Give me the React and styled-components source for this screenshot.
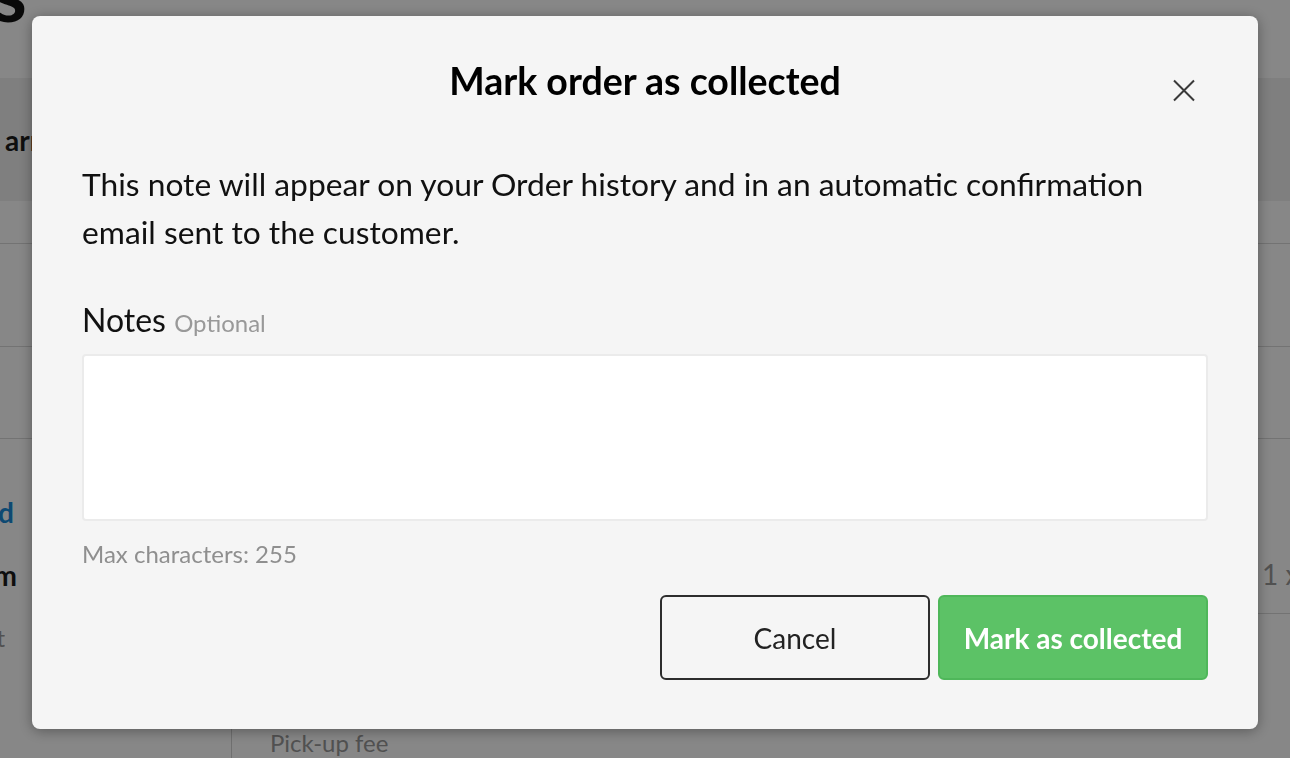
import React from "react";
import styled, { createGlobalStyle } from "styled-components";

const GlobalStyle = createGlobalStyle`
  html, body {
    margin: 0;
    padding: 0;
  }
  body {
    font-family: Lato, "Noto Sans", sans-serif;
    background: #fff;
    color: #111;
    overflow: hidden;
  }
`;

/* page behind the dialog */

const Page = styled.div`
  width: 1290px;
  height: 758px;
  overflow: hidden;
`;

const TopBar = styled.header`
  height: 78px;
`;

const Clip = styled.div`
  width: ${(props) => props.width}px;
  overflow: hidden;
  display: flex;
  justify-content: flex-end;
  white-space: nowrap;
`;

const PageTitle = styled.h1`
  margin: -49px 0 0;
  font-size: 80px;
  line-height: 1;
  font-weight: 700;
  color: #111;
`;

const Band = styled.div`
  height: 123px;
  background: #f0f0f0;
  display: flex;
  align-items: center;
  padding-left: 5px;
  white-space: nowrap;
`;

const BandLabel = styled.span`
  font-size: 28px;
  line-height: 34px;
  font-weight: 700;
  color: #1c1c1c;
`;

const Row = styled.div`
  height: ${(props) => props.height}px;
  border-bottom: 1px solid #d9d9d9;
`;

const Detail = styled.div`
  display: grid;
  grid-template-columns: 231px 1fr;
  height: 320px;
`;

const Side = styled.div`
  display: flex;
  flex-direction: column;
  padding-top: 56px;
`;

const SideItem = styled.span`
  font-size: ${(props) => (props.small ? 24 : 28)}px;
  line-height: ${(props) => (props.small ? 30 : 34)}px;
  font-weight: ${(props) => (props.small ? 400 : 700)};
  color: ${(props) => props.color || "#1c1c1c"};
  margin-top: ${(props) => props.gap || 0}px;
`;

const Main = styled.div`
  border-left: 1px solid #d2d2d2;
`;

const LineRow = styled.div`
  display: grid;
  grid-template-columns: 992px auto;
  padding: ${(props) => props.top}px 0 0 38px;
  height: ${(props) => props.height}px;
  box-sizing: border-box;
  border-bottom: ${(props) => (props.divider ? "1px solid #d9d9d9" : "none")};
  white-space: nowrap;
`;

const LineText = styled.span`
  font-size: ${(props) => props.size}px;
  line-height: ${(props) => props.lh}px;
  color: #999;
`;

/* dialog */

const Overlay = styled.div`
  position: fixed;
  inset: 0;
  background: rgba(0, 0, 0, 0.47);
  display: flex;
  justify-content: center;
  align-items: flex-start;
  padding-top: 16px;
`;

const Modal = styled.div`
  width: 1226px;
  box-sizing: border-box;
  background: #f5f5f5;
  border-radius: 8px;
  box-shadow: 0 2px 14px rgba(0, 0, 0, 0.35);
  padding: 41px 50px 49px;
`;

const Header = styled.div`
  display: grid;
  grid-template-columns: 1fr auto 1fr;
`;

const Title = styled.h2`
  grid-column: 2;
  margin: 0;
  font-size: 37.5px;
  line-height: 48px;
  font-weight: 700;
  color: #000;
`;

const CloseButton = styled.button`
  grid-column: 3;
  justify-self: end;
  align-self: start;
  margin: 22px 13px 0 0;
  width: 22px;
  height: 23px;
  padding: 0;
  border: none;
  background: none;
  color: #3a3a3a;
  cursor: pointer;
  display: flex;
`;

const Intro = styled.p`
  margin: 55px 0 0;
  font-size: 31.75px;
  line-height: 48px;
  color: #111;
`;

const Label = styled.label`
  display: block;
  margin-top: 44px;
  font-size: 32px;
  line-height: 40px;
  color: #111;
`;

const Optional = styled.span`
  font-size: 24px;
  line-height: 1;
  color: #999;
`;

const NotesInput = styled.textarea`
  display: block;
  margin-top: 14px;
  width: 100%;
  height: 167px;
  box-sizing: border-box;
  background: #fff;
  border: 2px solid #ebebeb;
  border-radius: 4px;
  resize: none;
  font-family: inherit;
  font-size: 24px;
  padding: 12px 16px;
  outline: none;
`;

const Hint = styled.div`
  margin-top: 18px;
  font-size: 24px;
  line-height: 30px;
  color: #8f8f8f;
`;

const Actions = styled.div`
  margin-top: 26px;
  display: flex;
  justify-content: flex-end;
  gap: 8px;
`;

const Button = styled.button`
  width: 270px;
  height: 85px;
  box-sizing: border-box;
  border-radius: 6px;
  font-family: inherit;
  font-size: 28px;
  cursor: pointer;
  border: 2px solid ${(props) => (props.primary ? "#4fb75a" : "#2d2d2d")};
  background: ${(props) => (props.primary ? "#5cc266" : "transparent")};
  color: ${(props) => (props.primary ? "#fff" : "#222")};
  font-weight: ${(props) => (props.primary ? 700 : 400)};
`;

export default function App() {
  return (
    <>
      <GlobalStyle />
      <Page>
        <TopBar>
          <Clip width={27}>
            <PageTitle>Orders</PageTitle>
          </Clip>
        </TopBar>
        <Band>
          <BandLabel>arrivals today</BandLabel>
        </Band>
        <Row height={42} />
        <Row height={102} />
        <Row height={91} />
        <Detail>
          <Side>
            <Clip width={14}>
              <SideItem color="#1a8ad8">Collected</SideItem>
            </Clip>
            <Clip width={17}>
              <SideItem gap={29}>Anna Pearson Bloom</SideItem>
            </Clip>
            <Clip width={5}>
              <SideItem small gap={31} color="#999">
                Paid by card at checkout
              </SideItem>
            </Clip>
          </Side>
          <Main>
            <LineRow top={118} height={175} divider>
              <span />
              <LineText size={28} lh={34}>
                1 x Sourdough loaf
              </LineText>
            </LineRow>
            <LineRow top={114} height={160}>
              <LineText size={24} lh={30}>
                Pick-up fee
              </LineText>
            </LineRow>
          </Main>
        </Detail>
      </Page>

      <Overlay>
        <Modal role="dialog" aria-modal="true">
          <Header>
            <Title>Mark order as collected</Title>
            <CloseButton aria-label="Close">
              <svg width="22" height="23" viewBox="0 0 22 23">
                <path
                  d="M1 1.5 L21 21.5 M21 1.5 L1 21.5"
                  stroke="currentColor"
                  strokeWidth="2"
                  fill="none"
                />
              </svg>
            </CloseButton>
          </Header>
          <Intro>
            This note will appear on your Order history and in an automatic
            confirmation email sent to the customer.
          </Intro>
          <Label htmlFor="notes">
            Notes <Optional>Optional</Optional>
          </Label>
          <NotesInput id="notes" maxLength={255} />
          <Hint>Max characters: 255</Hint>
          <Actions>
            <Button>Cancel</Button>
            <Button primary>Mark as collected</Button>
          </Actions>
        </Modal>
      </Overlay>
    </>
  );
}
